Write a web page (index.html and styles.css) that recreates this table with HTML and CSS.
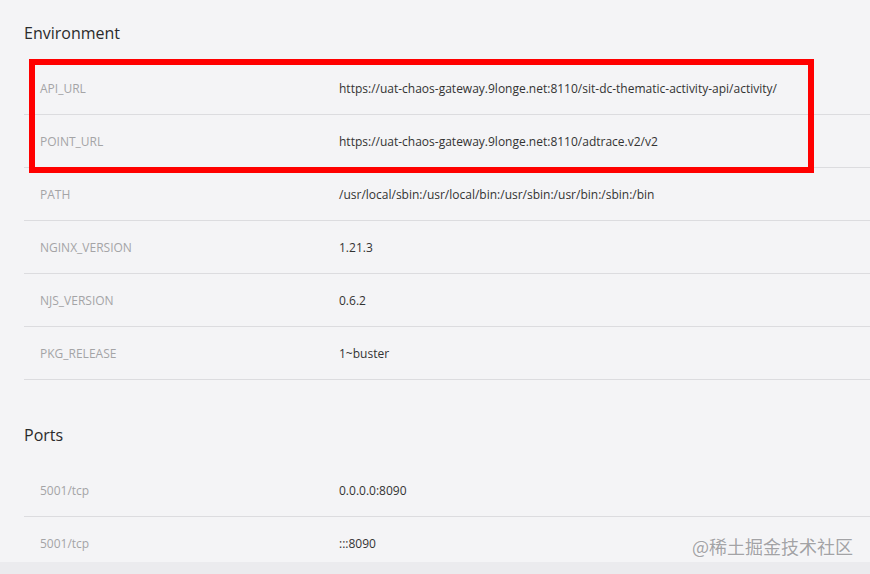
FILE: index.html
```html
<!DOCTYPE html>
<html>
<head>
<meta charset="utf-8">
<link rel="stylesheet" href="styles.css">
</head>
<body>
<div class="viewport">
  <main class="page">
    <section class="section">
      <h2 class="section-title">Environment</h2>
      <div class="kv-table">
        <div class="kv-row"><div class="kv-key">API_URL</div><div class="kv-val">https://uat-chaos-gateway.9longe.net:8110/sit-dc-thematic-activity-api/activity/</div></div>
        <div class="kv-row"><div class="kv-key">POINT_URL</div><div class="kv-val">https://uat-chaos-gateway.9longe.net:8110/adtrace.v2/v2</div></div>
        <div class="kv-row"><div class="kv-key">PATH</div><div class="kv-val">/usr/local/sbin:/usr/local/bin:/usr/sbin:/usr/bin:/sbin:/bin</div></div>
        <div class="kv-row"><div class="kv-key">NGINX_VERSION</div><div class="kv-val">1.21.3</div></div>
        <div class="kv-row"><div class="kv-key">NJS_VERSION</div><div class="kv-val">0.6.2</div></div>
        <div class="kv-row"><div class="kv-key">PKG_RELEASE</div><div class="kv-val">1~buster</div></div>
        <div class="highlight-box"></div>
      </div>
    </section>
    <section class="section section-next">
      <h2 class="section-title">Ports</h2>
      <div class="kv-table">
        <div class="kv-row"><div class="kv-key">5001/tcp</div><div class="kv-val">0.0.0.0:8090</div></div>
        <div class="kv-row"><div class="kv-key">5001/tcp</div><div class="kv-val">:::8090</div></div>
      </div>
    </section>
  </main>
  <div class="watermark">@稀土掘金技术社区</div>
</div>
<div class="bottom-strip"></div>
</body>
</html>
```
FILE: styles.css
```css
html, body {
  margin: 0;
  padding: 0;
  background: #f4f4f6;
  font-family: "Open Sans", "Noto Sans", sans-serif;
}

.viewport {
  position: relative;
  height: 562px;
  overflow: hidden;
}

.page {
  padding: 22px 0 0 24px;
}

.section-title {
  margin: 0 0 18px 0;
  font-size: 16px;
  line-height: 22px;
  font-weight: 400;
  color: #2b2b2b;
}

.section-next {
  margin-top: 44px;
}

.kv-table {
  position: relative;
}

.kv-row {
  display: grid;
  grid-template-columns: 315px 1fr;
  height: 52px;
  align-items: center;
  border-bottom: 1px solid #dcdcdf;
  font-size: 12px;
}

.kv-key {
  padding-left: 16px;
  color: #a4a4a6;
}

.kv-val {
  color: #333;
  white-space: nowrap;
}

.highlight-box {
  position: absolute;
  left: 5px;
  top: -3px;
  width: 773px;
  height: 102px;
  border: 6px solid #ff0000;
}

.watermark {
  position: absolute;
  right: 17px;
  bottom: 3px;
  font-family: "Noto Sans CJK SC", sans-serif;
  font-size: 18px;
  color: #a3a3a6;
  text-shadow: 0 0 2px #ffffff;
}

.bottom-strip {
  height: 12px;
  background: #ebebee;
}
```
